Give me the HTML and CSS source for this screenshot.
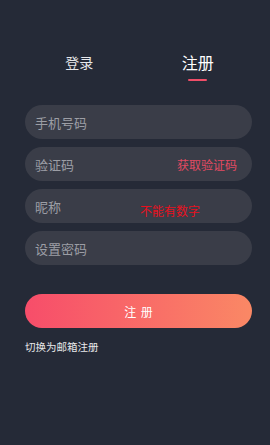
FILE: index.html
```html
<!DOCTYPE html>
<html lang="zh-CN">
<head>
  <meta charset="UTF-8">
  <meta name="viewport" content="width=device-width, initial-scale=1.0">
  <title>注册</title>
  <link rel="stylesheet" href="styles.css">
</head>
<body>
  <div class="page">
    <div class="tabs">
      <div class="tab"><span class="label">登录</span></div>
      <div class="tab active"><span class="label">注册<span class="bar"></span></span></div>
    </div>

    <div class="form">
      <div class="field"><input type="text" placeholder="手机号码"></div>
      <div class="field">
        <input type="text" placeholder="验证码">
        <span class="get-code">获取验证码</span>
      </div>
      <div class="field">
        <input type="text" placeholder="昵称">
        <span class="hint">不能有数字</span>
      </div>
      <div class="field"><input type="password" placeholder="设置密码"></div>
    </div>

    <button class="submit-btn">注 册</button>
    <div class="switch">切换为邮箱注册</div>
  </div>
</body>
</html>
```

FILE: styles.css
```css
* {
  margin: 0;
  padding: 0;
  box-sizing: border-box;
}

body {
  background-color: #252a37;
  font-family: "Noto Sans CJK SC", "Noto Sans", sans-serif;
  height: 100vh;
}

.page {
  padding: 47px 18px 0 25px;
}

.tabs {
  display: flex;
  height: 37px;
}

.tab {
  flex: 1;
  text-align: center;
  color: #e6e7ea;
  font-size: 14px;
  line-height: 30px;
  padding-right: 4px;
}

.tab.active {
  font-size: 16px;
  color: #fff;
  padding-right: 0;
  padding-left: 6px;
}

.tab .label {
  position: relative;
  display: inline-block;
}

.tab .bar {
  position: absolute;
  left: 50%;
  margin-left: -10px;
  top: 32px;
  width: 19px;
  height: 2px;
  background-color: #f04e68;
  border-radius: 1px;
}

.form {
  margin-top: 21px;
  display: flex;
  flex-direction: column;
  gap: 8px;
}

.field {
  position: relative;
  height: 34px;
  border-radius: 17px;
  background-color: #3a3d48;
}

.field input {
  width: 100%;
  height: 100%;
  background: transparent;
  border: none;
  outline: none;
  padding-left: 10px;
  font-family: "Noto Sans CJK SC", sans-serif;
  font-size: 13px;
  color: #fff;
}

.field input::placeholder {
  color: #9c9ea5;
}

.get-code {
  position: absolute;
  right: 15px;
  top: 8px;
  font-size: 12px;
  line-height: 20px;
  color: #e24a62;
}

.hint {
  position: absolute;
  left: 115px;
  top: 15px;
  font-family: "Liberation Serif", "Noto Sans CJK SC", serif;
  font-size: 12px;
  line-height: 16px;
  color: #e8101e;
}

.submit-btn {
  display: block;
  width: 100%;
  height: 34px;
  margin-top: 29px;
  border: none;
  border-radius: 17px;
  background: linear-gradient(to right, #f74d6a, #fa8865);
  color: #fff;
  font-family: "Noto Sans CJK SC", sans-serif;
  font-size: 12px;
  letter-spacing: 1px;
  padding-left: 1px;
}

.switch {
  margin-top: 11px;
  font-size: 10.5px;
  line-height: 16px;
  color: #e8e8ea;
}
```
